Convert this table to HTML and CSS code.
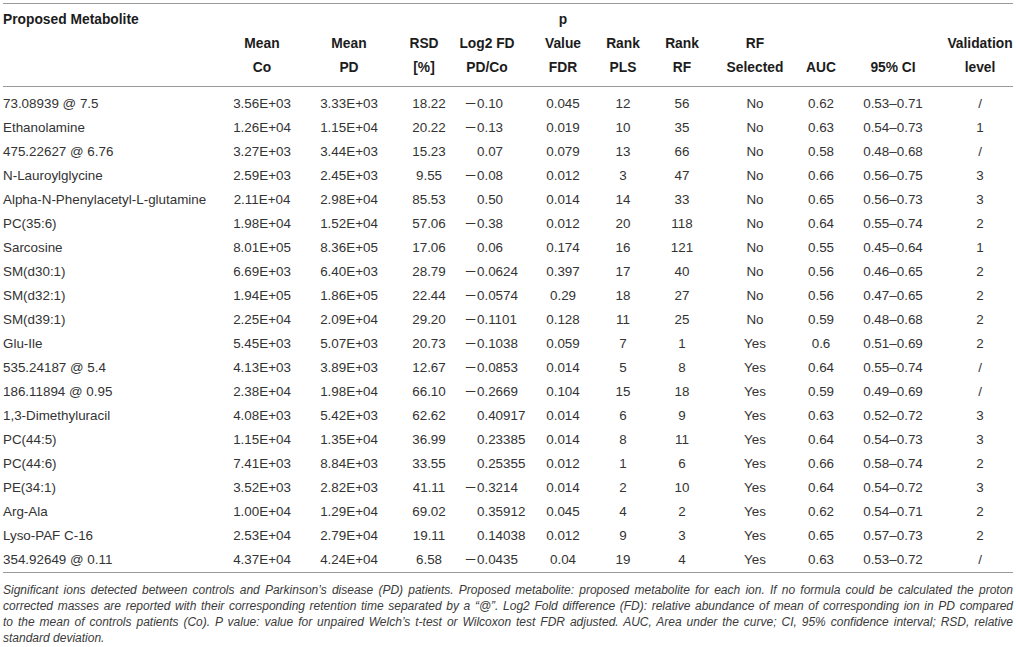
FILE: index.html
```html
<!DOCTYPE html>
<html lang="en">
<head>
<meta charset="utf-8">
<title>Significant ions table</title>
<link rel="stylesheet" href="styles.css">
</head>
<body>
<div class="page">
<table class="data">
<colgroup>
<col class="w-meta"><col class="w-co"><col class="w-pd"><col class="w-rsd"><col class="w-log"><col class="w-pval"><col class="w-pls"><col class="w-rf"><col class="w-sel"><col class="w-auc"><col class="w-ci"><col class="w-val">
</colgroup>
<thead>
<tr>
<th class="meta">Proposed Metabolite</th>
<th>Mean<br>Co</th>
<th>Mean<br>PD</th>
<th>RSD<br>[%]</th>
<th>Log2 FD<br>PD/Co</th>
<th class="pval">p<br>Value<br>FDR</th>
<th>Rank<br>PLS</th>
<th>Rank<br>RF</th>
<th>RF<br>Selected</th>
<th>AUC</th>
<th>95% CI</th>
<th class="val">Validation<br>level</th>
</tr>
</thead>
<tbody>
<tr><td class="meta">73.08939 @ 7.5</td><td>3.56E+03</td><td>3.33E+03</td><td class="rsd">18.22</td><td class="log"><span class="sign">−</span>0.10</td><td class="pval">0.045</td><td>12</td><td>56</td><td>No</td><td>0.62</td><td>0.53–0.71</td><td class="val">/</td></tr>
<tr><td class="meta">Ethanolamine</td><td>1.26E+04</td><td>1.15E+04</td><td class="rsd">20.22</td><td class="log"><span class="sign">−</span>0.13</td><td class="pval">0.019</td><td>10</td><td>35</td><td>No</td><td>0.63</td><td>0.54–0.73</td><td class="val">1</td></tr>
<tr><td class="meta">475.22627 @ 6.76</td><td>3.27E+03</td><td>3.44E+03</td><td class="rsd">15.23</td><td class="log"><span class="sign"></span>0.07</td><td class="pval">0.079</td><td>13</td><td>66</td><td>No</td><td>0.58</td><td>0.48–0.68</td><td class="val">/</td></tr>
<tr><td class="meta">N-Lauroylglycine</td><td>2.59E+03</td><td>2.45E+03</td><td class="rsd">9.55</td><td class="log"><span class="sign">−</span>0.08</td><td class="pval">0.012</td><td>3</td><td>47</td><td>No</td><td>0.66</td><td>0.56–0.75</td><td class="val">3</td></tr>
<tr><td class="meta">Alpha-N-Phenylacetyl-L-glutamine</td><td>2.11E+04</td><td>2.98E+04</td><td class="rsd">85.53</td><td class="log"><span class="sign"></span>0.50</td><td class="pval">0.014</td><td>14</td><td>33</td><td>No</td><td>0.65</td><td>0.56–0.73</td><td class="val">3</td></tr>
<tr><td class="meta">PC(35:6)</td><td>1.98E+04</td><td>1.52E+04</td><td class="rsd">57.06</td><td class="log"><span class="sign">−</span>0.38</td><td class="pval">0.012</td><td>20</td><td>118</td><td>No</td><td>0.64</td><td>0.55–0.74</td><td class="val">2</td></tr>
<tr><td class="meta">Sarcosine</td><td>8.01E+05</td><td>8.36E+05</td><td class="rsd">17.06</td><td class="log"><span class="sign"></span>0.06</td><td class="pval">0.174</td><td>16</td><td>121</td><td>No</td><td>0.55</td><td>0.45–0.64</td><td class="val">1</td></tr>
<tr><td class="meta">SM(d30:1)</td><td>6.69E+03</td><td>6.40E+03</td><td class="rsd">28.79</td><td class="log"><span class="sign">−</span>0.0624</td><td class="pval">0.397</td><td>17</td><td>40</td><td>No</td><td>0.56</td><td>0.46–0.65</td><td class="val">2</td></tr>
<tr><td class="meta">SM(d32:1)</td><td>1.94E+05</td><td>1.86E+05</td><td class="rsd">22.44</td><td class="log"><span class="sign">−</span>0.0574</td><td class="pval">0.29</td><td>18</td><td>27</td><td>No</td><td>0.56</td><td>0.47–0.65</td><td class="val">2</td></tr>
<tr><td class="meta">SM(d39:1)</td><td>2.25E+04</td><td>2.09E+04</td><td class="rsd">29.20</td><td class="log"><span class="sign">−</span>0.1101</td><td class="pval">0.128</td><td>11</td><td>25</td><td>No</td><td>0.59</td><td>0.48–0.68</td><td class="val">2</td></tr>
<tr><td class="meta">Glu-Ile</td><td>5.45E+03</td><td>5.07E+03</td><td class="rsd">20.73</td><td class="log"><span class="sign">−</span>0.1038</td><td class="pval">0.059</td><td>7</td><td>1</td><td>Yes</td><td>0.6</td><td>0.51–0.69</td><td class="val">2</td></tr>
<tr><td class="meta">535.24187 @ 5.4</td><td>4.13E+03</td><td>3.89E+03</td><td class="rsd">12.67</td><td class="log"><span class="sign">−</span>0.0853</td><td class="pval">0.014</td><td>5</td><td>8</td><td>Yes</td><td>0.64</td><td>0.55–0.74</td><td class="val">/</td></tr>
<tr><td class="meta">186.11894 @ 0.95</td><td>2.38E+04</td><td>1.98E+04</td><td class="rsd">66.10</td><td class="log"><span class="sign">−</span>0.2669</td><td class="pval">0.104</td><td>15</td><td>18</td><td>Yes</td><td>0.59</td><td>0.49–0.69</td><td class="val">/</td></tr>
<tr><td class="meta">1,3-Dimethyluracil</td><td>4.08E+03</td><td>5.42E+03</td><td class="rsd">62.62</td><td class="log"><span class="sign"></span>0.40917</td><td class="pval">0.014</td><td>6</td><td>9</td><td>Yes</td><td>0.63</td><td>0.52–0.72</td><td class="val">3</td></tr>
<tr><td class="meta">PC(44:5)</td><td>1.15E+04</td><td>1.35E+04</td><td class="rsd">36.99</td><td class="log"><span class="sign"></span>0.23385</td><td class="pval">0.014</td><td>8</td><td>11</td><td>Yes</td><td>0.64</td><td>0.54–0.73</td><td class="val">3</td></tr>
<tr><td class="meta">PC(44:6)</td><td>7.41E+03</td><td>8.84E+03</td><td class="rsd">33.55</td><td class="log"><span class="sign"></span>0.25355</td><td class="pval">0.012</td><td>1</td><td>6</td><td>Yes</td><td>0.66</td><td>0.58–0.74</td><td class="val">2</td></tr>
<tr><td class="meta">PE(34:1)</td><td>3.52E+03</td><td>2.82E+03</td><td class="rsd">41.11</td><td class="log"><span class="sign">−</span>0.3214</td><td class="pval">0.014</td><td>2</td><td>10</td><td>Yes</td><td>0.64</td><td>0.54–0.72</td><td class="val">3</td></tr>
<tr><td class="meta">Arg-Ala</td><td>1.00E+04</td><td>1.29E+04</td><td class="rsd">69.02</td><td class="log"><span class="sign"></span>0.35912</td><td class="pval">0.045</td><td>4</td><td>2</td><td>Yes</td><td>0.62</td><td>0.54–0.71</td><td class="val">2</td></tr>
<tr><td class="meta">Lyso-PAF C-16</td><td>2.53E+04</td><td>2.79E+04</td><td class="rsd">19.11</td><td class="log"><span class="sign"></span>0.14038</td><td class="pval">0.012</td><td>9</td><td>3</td><td>Yes</td><td>0.65</td><td>0.57–0.73</td><td class="val">2</td></tr>
<tr><td class="meta">354.92649 @ 0.11</td><td>4.37E+04</td><td>4.24E+04</td><td class="rsd">6.58</td><td class="log"><span class="sign">−</span>0.0435</td><td class="pval">0.04</td><td>19</td><td>4</td><td>Yes</td><td>0.63</td><td>0.53–0.72</td><td class="val">/</td></tr>
</tbody>
</table>
<p class="caption"><span class="cline">Significant ions detected between controls and Parkinson’s disease (PD) patients. Proposed metabolite: proposed metabolite for each ion. If no formula could be calculated the proton</span> <span class="cline">corrected masses are reported with their corresponding retention time separated by a “@”. Log2 Fold difference (FD): relative abundance of mean of corresponding ion in PD compared</span> <span class="cline">to the mean of controls patients (Co). P value: value for unpaired Welch’s t-test or Wilcoxon test FDR adjusted. AUC, Area under the curve; CI, 95% confidence interval; RSD, relative</span> <span class="cline last">standard deviation.</span></p>
</div>
</body>
</html>
```

FILE: styles.css
```css
html, body {
  margin: 0;
  padding: 0;
  background: #ffffff;
}

body {
  font-family: "Liberation Sans", Arial, sans-serif;
  color: #333333;
}

.page {
  padding: 3px 3px 0 3px;
  width: 1010px;
}

.data {
  border-collapse: collapse;
  table-layout: fixed;
  width: 1010px;
  font-size: 13.4px;
}

.w-meta { width: 215px; }
.w-co { width: 88px; }
.w-pd { width: 86px; }
.w-rsd { width: 64px; }
.w-log { width: 62px; }
.w-pval { width: 78px; }
.w-pls { width: 54px; }
.w-rf { width: 64px; }
.w-sel { width: 82px; }
.w-auc { width: 50px; }
.w-ci { width: 94px; }
.w-val { width: 73px; }

.data th {
  font-size: 13.8px;
  font-weight: bold;
  color: #1c1c1c;
  line-height: 24px;
  padding: 4px 0 6px 0;
  text-align: center;
  vertical-align: bottom;
  white-space: nowrap;
  border-top: 1px solid #9a9a9a;
  border-bottom: 1px solid #9a9a9a;
}

.data th.meta {
  text-align: left;
  vertical-align: top;
}

.data td {
  line-height: 24px;
  padding: 0;
  text-align: center;
  white-space: nowrap;
}

.data td.meta {
  text-align: left;
}

.data td.rsd {
  padding-left: 10px;
}

.data td.log {
  text-align: left;
  padding-left: 9px;
}

.sign {
  display: inline-block;
  width: 12px;
  transform: scaleX(1.45);
  transform-origin: 0 50%;
}

.data .pval {
  padding-left: 12px;
}

.data .val {
  padding-left: 7px;
}

.data tbody tr:first-child td {
  padding-top: 5px;
}

.data tbody tr:last-child td {
  border-bottom: 1px solid #9a9a9a;
}

.caption {
  margin: 9px 0 0 0;
  font-size: 12px;
  line-height: 16px;
  font-style: italic;
  color: #3a3a3a;
}

.cline {
  display: block;
  text-align: justify;
  text-align-last: justify;
}

.cline.last {
  text-align-last: left;
}
```
